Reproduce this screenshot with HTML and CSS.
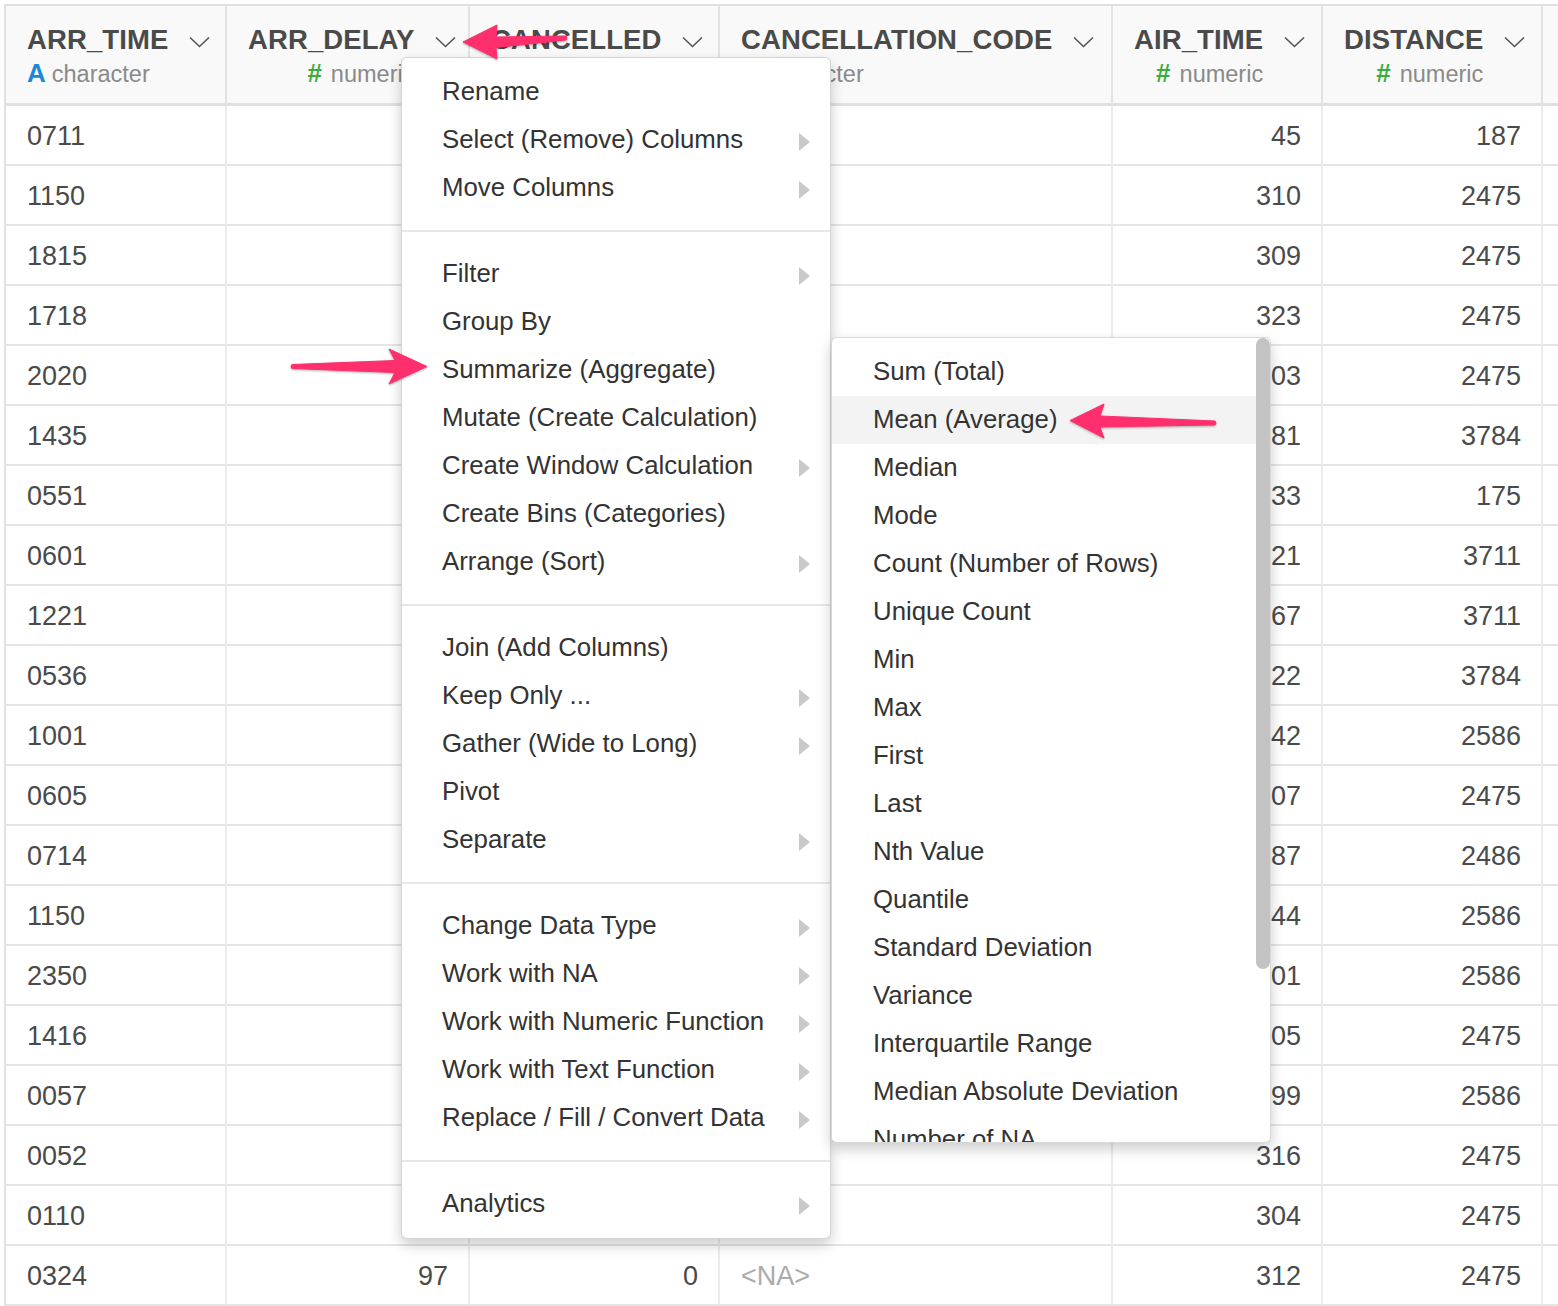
FILE: index.html
```html
<!DOCTYPE html>
<html>
<head>
<meta charset="utf-8">
<link rel="stylesheet" href="styles.css">
</head>
<body>
<div class="page">
  <div class="table">
    <div class="row head">
      <div class="c hc"><div class="ht"><span class="title">ARR_TIME</span><span class="sub"><i class="ic-a">A</i>character</span></div><svg class="chev" viewBox="0 0 21 12"><path d="M1 1.5 L10.5 10.5 L20 1.5"/></svg></div>
      <div class="c hc"><div class="ht num"><span class="title">ARR_DELAY</span><span class="sub"><i class="ic-n">#</i>numeric</span></div><svg class="chev" viewBox="0 0 21 12"><path d="M1 1.5 L10.5 10.5 L20 1.5"/></svg></div>
      <div class="c hc"><div class="ht num"><span class="title">CANCELLED</span><span class="sub"></span></div><svg class="chev" viewBox="0 0 21 12"><path d="M1 1.5 L10.5 10.5 L20 1.5"/></svg></div>
      <div class="c hc"><div class="ht"><span class="title">CANCELLATION_CODE</span><span class="sub"><i class="ic-a">A</i>character</span></div><svg class="chev" viewBox="0 0 21 12"><path d="M1 1.5 L10.5 10.5 L20 1.5"/></svg></div>
      <div class="c hc"><div class="ht num"><span class="title">AIR_TIME</span><span class="sub"><i class="ic-n">#</i>numeric</span></div><svg class="chev" viewBox="0 0 21 12"><path d="M1 1.5 L10.5 10.5 L20 1.5"/></svg></div>
      <div class="c hc"><div class="ht num"><span class="title">DISTANCE</span><span class="sub"><i class="ic-n">#</i>numeric</span></div><svg class="chev" viewBox="0 0 21 12"><path d="M1 1.5 L10.5 10.5 L20 1.5"/></svg></div>
      <div class="c hc"></div>
    </div>
    <div class="row body"><div class="c">0711</div><div class="c"></div><div class="c"></div><div class="c"></div><div class="c r">45</div><div class="c r">187</div><div class="c"></div></div>
    <div class="row body"><div class="c">1150</div><div class="c"></div><div class="c"></div><div class="c"></div><div class="c r">310</div><div class="c r">2475</div><div class="c"></div></div>
    <div class="row body"><div class="c">1815</div><div class="c"></div><div class="c"></div><div class="c"></div><div class="c r">309</div><div class="c r">2475</div><div class="c"></div></div>
    <div class="row body"><div class="c">1718</div><div class="c"></div><div class="c"></div><div class="c"></div><div class="c r">323</div><div class="c r">2475</div><div class="c"></div></div>
    <div class="row body"><div class="c">2020</div><div class="c"></div><div class="c"></div><div class="c"></div><div class="c r">303</div><div class="c r">2475</div><div class="c"></div></div>
    <div class="row body"><div class="c">1435</div><div class="c"></div><div class="c"></div><div class="c"></div><div class="c r">381</div><div class="c r">3784</div><div class="c"></div></div>
    <div class="row body"><div class="c">0551</div><div class="c"></div><div class="c"></div><div class="c"></div><div class="c r">33</div><div class="c r">175</div><div class="c"></div></div>
    <div class="row body"><div class="c">0601</div><div class="c"></div><div class="c"></div><div class="c"></div><div class="c r">421</div><div class="c r">3711</div><div class="c"></div></div>
    <div class="row body"><div class="c">1221</div><div class="c"></div><div class="c"></div><div class="c"></div><div class="c r">367</div><div class="c r">3711</div><div class="c"></div></div>
    <div class="row body"><div class="c">0536</div><div class="c"></div><div class="c"></div><div class="c"></div><div class="c r">422</div><div class="c r">3784</div><div class="c"></div></div>
    <div class="row body"><div class="c">1001</div><div class="c"></div><div class="c"></div><div class="c"></div><div class="c r">342</div><div class="c r">2586</div><div class="c"></div></div>
    <div class="row body"><div class="c">0605</div><div class="c"></div><div class="c"></div><div class="c"></div><div class="c r">307</div><div class="c r">2475</div><div class="c"></div></div>
    <div class="row body"><div class="c">0714</div><div class="c"></div><div class="c"></div><div class="c"></div><div class="c r">287</div><div class="c r">2486</div><div class="c"></div></div>
    <div class="row body"><div class="c">1150</div><div class="c"></div><div class="c"></div><div class="c"></div><div class="c r">344</div><div class="c r">2586</div><div class="c"></div></div>
    <div class="row body"><div class="c">2350</div><div class="c"></div><div class="c"></div><div class="c"></div><div class="c r">301</div><div class="c r">2586</div><div class="c"></div></div>
    <div class="row body"><div class="c">1416</div><div class="c"></div><div class="c"></div><div class="c"></div><div class="c r">305</div><div class="c r">2475</div><div class="c"></div></div>
    <div class="row body"><div class="c">0057</div><div class="c"></div><div class="c"></div><div class="c"></div><div class="c r">299</div><div class="c r">2586</div><div class="c"></div></div>
    <div class="row body"><div class="c">0052</div><div class="c"></div><div class="c"></div><div class="c"></div><div class="c r">316</div><div class="c r">2475</div><div class="c"></div></div>
    <div class="row body"><div class="c">0110</div><div class="c"></div><div class="c"></div><div class="c"></div><div class="c r">304</div><div class="c r">2475</div><div class="c"></div></div>
    <div class="row body"><div class="c">0324</div><div class="c r">97</div><div class="c r">0</div><div class="c na">&lt;NA&gt;</div><div class="c r">312</div><div class="c r">2475</div><div class="c"></div></div>
  </div>

  <div class="menu">
    <div class="mi">Rename</div>
    <div class="mi more">Select (Remove) Columns</div>
    <div class="mi more">Move Columns</div>
    <div class="sep"></div>
    <div class="mi more">Filter</div>
    <div class="mi">Group By</div>
    <div class="mi">Summarize (Aggregate)</div>
    <div class="mi">Mutate (Create Calculation)</div>
    <div class="mi more">Create Window Calculation</div>
    <div class="mi">Create Bins (Categories)</div>
    <div class="mi more">Arrange (Sort)</div>
    <div class="sep"></div>
    <div class="mi">Join (Add Columns)</div>
    <div class="mi more">Keep Only ...</div>
    <div class="mi more">Gather (Wide to Long)</div>
    <div class="mi">Pivot</div>
    <div class="mi more">Separate</div>
    <div class="sep"></div>
    <div class="mi more">Change Data Type</div>
    <div class="mi more">Work with NA</div>
    <div class="mi more">Work with Numeric Function</div>
    <div class="mi more">Work with Text Function</div>
    <div class="mi more">Replace / Fill / Convert Data</div>
    <div class="sep"></div>
    <div class="mi more">Analytics</div>
  </div>

  <div class="submenu">
    <div class="si">Sum (Total)</div>
    <div class="si hl">Mean (Average)</div>
    <div class="si">Median</div>
    <div class="si">Mode</div>
    <div class="si">Count (Number of Rows)</div>
    <div class="si">Unique Count</div>
    <div class="si">Min</div>
    <div class="si">Max</div>
    <div class="si">First</div>
    <div class="si">Last</div>
    <div class="si">Nth Value</div>
    <div class="si">Quantile</div>
    <div class="si">Standard Deviation</div>
    <div class="si">Variance</div>
    <div class="si">Interquartile Range</div>
    <div class="si">Median Absolute Deviation</div>
    <div class="si">Number of NA</div>
    <div class="thumb"></div>
  </div>

  <svg class="arrows" viewBox="0 0 1558 1306" width="1558" height="1306">
    <path d="M566,36 L496,37 L497,25 L463,42 L497,59 L496,47.5 L566,40 Q568,38 566,36 Z"/>
    <path d="M292,364.5 L395,360.5 L389,349 L427,366.5 L389,384 L395,372.5 L292,368.5 Q290,366.5 292,364.5 Z"/>
    <path d="M1215,421 L1100,416 L1104,404 L1070,420.5 L1104,438 L1100,427 L1215,425 Q1217,423 1215,421 Z"/>
  </svg>
</div>
</body>
</html>
```

FILE: styles.css
```css
* { box-sizing: border-box; }

body {
  margin: 0;
  background: #fff;
  font-family: "Liberation Sans", Arial, Helvetica, sans-serif;
}

.page {
  position: relative;
  width: 1558px;
  height: 1306px;
  overflow: hidden;
}

/* ---------- table ---------- */
.table {
  margin: 4px 0 0 4px;
  border-top: 2px solid #e1e1e1;
  border-left: 2px solid #e1e1e1;
  display: flex;
  flex-direction: column;
}

.row {
  display: grid;
  grid-template-columns: 221px 243px 250px 393px 210px 220px 40px;
}

.head .c {
  height: 100px;
  background: #f9f9f9;
  border-right: 2px solid #e3e3e3;
  border-bottom: 3px solid #e0e0e0;
}

.hc {
  display: flex;
  align-items: flex-start;
  gap: 21px;
  padding: 18px 0 0 21px;
  white-space: nowrap;
}

.ht {
  display: flex;
  flex-direction: column;
  align-items: flex-start;
}

.ht.num { align-items: flex-end; }

.title {
  font-size: 27.5px;
  font-weight: bold;
  line-height: 32px;
  color: #4a4a4a;
  letter-spacing: 0.1px;
}

.sub {
  display: flex;
  align-items: baseline;
  gap: 6px;
  margin-top: 3px;
  font-size: 23.5px;
  line-height: 28px;
  color: #8a8a8a;
}

.ic-a {
  font-style: normal;
  font-weight: bold;
  font-size: 26px;
  color: #1a8ad8;
}

.ic-n {
  font-style: normal;
  font-weight: bold;
  font-size: 26px;
  color: #3cad3c;
  margin-right: 3px;
}

.chev {
  flex: none;
  width: 21px;
  height: 12px;
  margin-top: 12px;
}

.chev path {
  fill: none;
  stroke: #555;
  stroke-width: 1.6;
}

.body .c {
  height: 60px;
  padding: 2px 20px 0 21px;
  border-right: 2px solid #ececec;
  border-bottom: 2px solid #e5e5e5;
  font-size: 27px;
  line-height: 56px;
  color: #4a4a4a;
  white-space: nowrap;
}

.body .r { text-align: right; }
.body .na { color: #ababab; }

/* ---------- main menu ---------- */
.menu {
  position: absolute;
  left: 401px;
  top: 57px;
  width: 430px;
  padding: 10px 0;
  background: #fff;
  border: 1px solid rgba(0, 0, 0, 0.17);
  border-radius: 6px;
  box-shadow: 0 6px 14px rgba(0, 0, 0, 0.2);
}

.mi {
  position: relative;
  height: 48px;
  line-height: 46px;
  padding-left: 40px;
  font-size: 25.8px;
  color: #333;
  white-space: nowrap;
}

.mi.more::after {
  content: "";
  position: absolute;
  right: 20px;
  top: 17px;
  border-left: 11px solid #c9c9c9;
  border-top: 9.5px solid transparent;
  border-bottom: 9.5px solid transparent;
}

.sep {
  height: 38px;
  display: flex;
  align-items: center;
}

.sep::before {
  content: "";
  width: 100%;
  height: 2px;
  background: #e7e7e7;
}

/* ---------- submenu ---------- */
.submenu {
  position: absolute;
  left: 831px;
  top: 337px;
  width: 440px;
  height: 806px;
  padding-top: 10px;
  overflow: hidden;
  background: #fff;
  border: 1px solid rgba(0, 0, 0, 0.15);
  border-radius: 6px;
  box-shadow: 0 6px 14px rgba(0, 0, 0, 0.2);
}

.si {
  height: 48px;
  line-height: 46px;
  padding-left: 41px;
  font-size: 25.8px;
  color: #333;
  white-space: nowrap;
}

.si.hl { background: #f3f3f3; }

.thumb {
  position: absolute;
  right: 0;
  top: 0;
  width: 14px;
  height: 631px;
  border-radius: 7px;
  background: #c3c3c3;
}

/* ---------- annotation arrows ---------- */
.arrows {
  position: absolute;
  left: 0;
  top: 0;
  pointer-events: none;
}

.arrows path {
  fill: #ff2e6c;
  stroke: #ff2e6c;
  stroke-width: 1;
  stroke-linejoin: round;
  filter: drop-shadow(0 1px 1px rgba(0, 0, 0, 0.3));
}
```
